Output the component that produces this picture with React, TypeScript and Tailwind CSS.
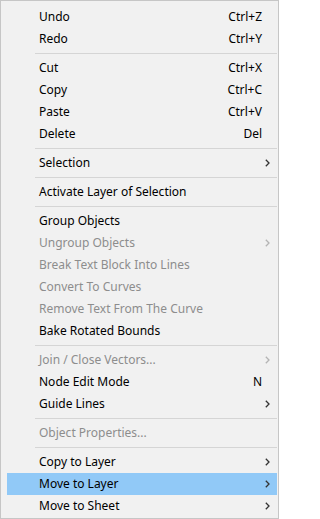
import React from 'react';

type Item =
  | { sep: true }
  | { label: string; shortcut?: string; sub?: boolean; disabled?: boolean; active?: boolean };

const items: Item[] = [
  { label: 'Undo', shortcut: 'Ctrl+Z' },
  { label: 'Redo', shortcut: 'Ctrl+Y' },
  { sep: true },
  { label: 'Cut', shortcut: 'Ctrl+X' },
  { label: 'Copy', shortcut: 'Ctrl+C' },
  { label: 'Paste', shortcut: 'Ctrl+V' },
  { label: 'Delete', shortcut: 'Del' },
  { sep: true },
  { label: 'Selection', sub: true },
  { sep: true },
  { label: 'Activate Layer of Selection' },
  { sep: true },
  { label: 'Group Objects' },
  { label: 'Ungroup Objects', sub: true, disabled: true },
  { label: 'Break Text Block Into Lines', disabled: true },
  { label: 'Convert To Curves', disabled: true },
  { label: 'Remove Text From The Curve', disabled: true },
  { label: 'Bake Rotated Bounds' },
  { sep: true },
  { label: 'Join / Close Vectors...', sub: true, disabled: true },
  { label: 'Node Edit Mode', shortcut: 'N' },
  { label: 'Guide Lines', sub: true },
  { sep: true },
  { label: 'Object Properties...', disabled: true },
  { sep: true },
  { label: 'Copy to Layer', sub: true },
  { label: 'Move to Layer', sub: true, active: true },
  { label: 'Move to Sheet', sub: true },
];

const Chevron: React.FC<{ disabled?: boolean }> = ({ disabled }) => (
  <svg width="5" height="8" viewBox="0 0 5 8" className="absolute right-[7px] top-[7px]">
    <polyline
      points="0.8,0.8 4,4 0.8,7.2"
      fill="none"
      stroke={disabled ? '#b4b4b4' : '#333333'}
      strokeWidth="1.3"
    />
  </svg>
);

export default function App() {
  return (
    <div className="w-[279px] h-[519px] bg-white">
      <div
        className="w-[279px] h-[519px] border border-[#c6c6c6] bg-[#f1f1f1] pl-[6px] pt-[5px] pr-[1px] pb-[1px] text-[12px] leading-none"
        style={{ fontFamily: '"Segoe UI", "Noto Sans", "Open Sans", sans-serif' }}
      >
        {items.map((it, i) =>
          'sep' in it ? (
            <div key={i} className="h-[7px] pl-[28px] flex items-center">
              <div className="h-px w-full bg-[#d5d5d5]" />
            </div>
          ) : (
            <div
              key={i}
              className={`relative h-[22px] flex items-center pl-[32px] pr-[15px] ${
                it.active ? 'bg-[#91c9f7]' : ''
              } ${it.disabled ? 'text-[#8d8d8d]' : 'text-black'}`}
            >
              <span className="flex-1 whitespace-nowrap">{it.label}</span>
              {it.shortcut && <span className="whitespace-nowrap">{it.shortcut}</span>}
              {it.sub && <Chevron disabled={it.disabled} />}
            </div>
          )
        )}
      </div>
    </div>
  );
}
